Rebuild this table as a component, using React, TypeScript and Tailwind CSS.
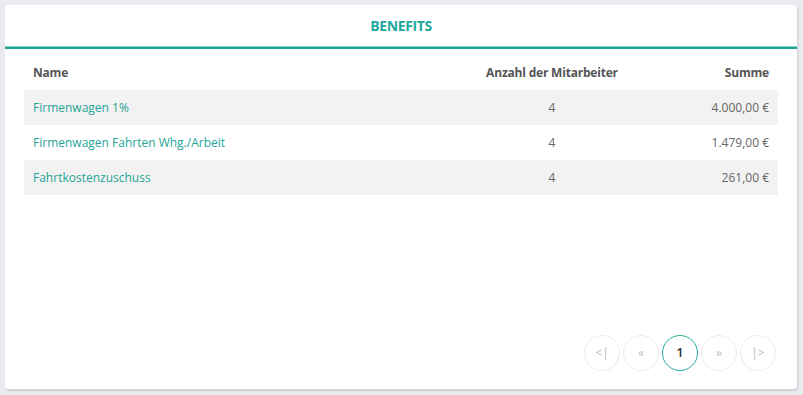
import React from "react";

const rows = [
  { name: "Firmenwagen 1%", count: "4", sum: "4.000,00 €" },
  { name: "Firmenwagen Fahrten Whg./Arbeit", count: "4", sum: "1.479,00 €" },
  { name: "Fahrtkostenzuschuss", count: "4", sum: "261,00 €" },
];

export default function App() {
  return (
    <div
      className="w-[803px] h-[395px] bg-[#e9ebf0] pt-[5px] pl-[5px] pr-[6px] pb-[6px]"
      style={{ fontFamily: '"Open Sans", "Noto Sans", sans-serif' }}
    >
      <div className="h-[384px] bg-white rounded-[3px] shadow-[1px_2px_2px_rgba(0,0,0,0.12)] flex flex-col">
        <div className="h-[41px] flex items-center justify-center text-[14px] font-bold text-[#23a99c] tracking-[-0.4px]">
          BENEFITS
        </div>
        <div className="h-[3px] bg-[#1fa594] border-t border-[#7fd3c8]" />
        <div className="px-[19px] pt-[6px] flex-1 flex flex-col">
          <div className="flex items-center h-[35px] text-[12px] font-bold text-[#555] tracking-[-0.2px]">
            <div className="flex-1 pl-[9px]">Name</div>
            <div className="w-[200px] text-center">Anzahl der Mitarbeiter</div>
            <div className="w-[126px] text-right pr-[9px]">Summe</div>
          </div>
          {rows.map((r, i) => (
            <div
              key={i}
              className={`flex items-center h-[35px] text-[12px] ${i % 2 === 0 ? "bg-[#f2f2f2]" : "bg-white"}`}
            >
              <div className="flex-1 pl-[9px] text-[#25a597]">{r.name}</div>
              <div className="w-[200px] text-center text-[#666]">{r.count}</div>
              <div className="w-[126px] text-right pr-[9px] text-[#666]">{r.sum}</div>
            </div>
          ))}
          <div className="flex-1" />
          <div className="flex justify-end gap-[3px] pb-[18px] pr-[2px]">
            {["<|", "«", "1", "»", "|>"].map((t) => (
              <div
                key={t}
                className={`w-[36px] h-[36px] rounded-full flex items-center justify-center text-[12px] ${
                  t === "1"
                    ? "border-[1.5px] border-[#26ae9f] text-[#333] font-semibold text-[13px]"
                    : "border border-[#ececec] text-[#bbb]"
                }`}
              >
                {t}
              </div>
            ))}
          </div>
        </div>
      </div>
    </div>
  );
}
